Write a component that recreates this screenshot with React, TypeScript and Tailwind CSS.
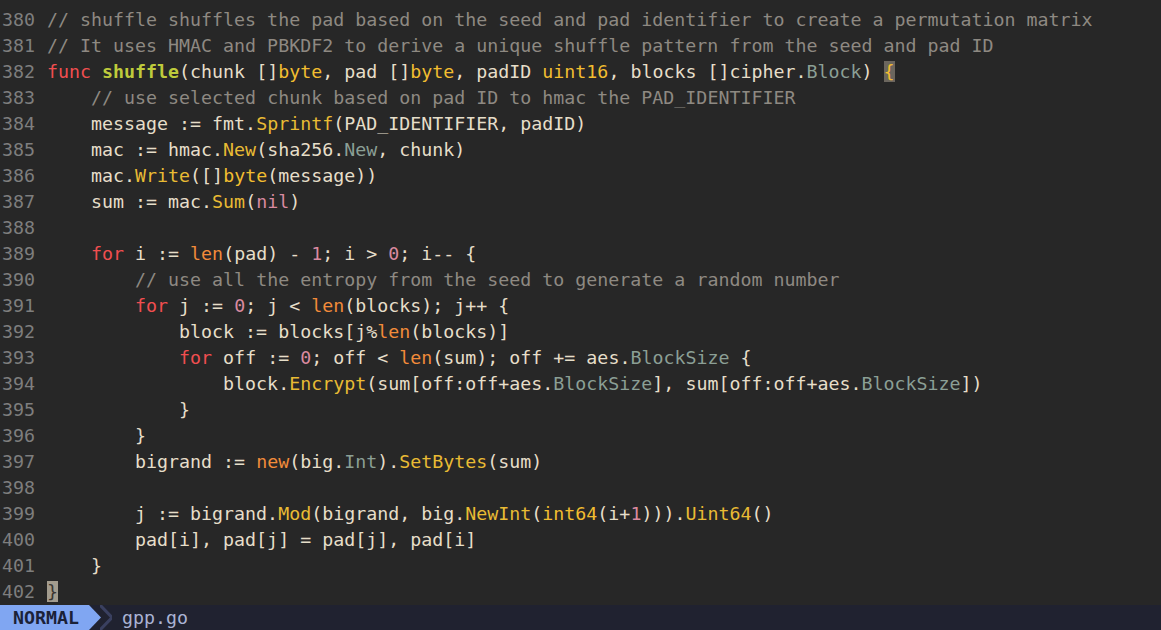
import React from "react";

type Tok = [string, string?];

const C: Record<string, string> = {
  cm: "text-[#8e8982]",
  kw: "text-[#f04e50]",
  def: "text-[#bfcb3c] font-bold",
  ty: "text-[#f2bd30]",
  fn: "text-[#e9bb34]",
  bi: "text-[#f28b3a]",
  num: "text-[#d98aa0]",
  fld: "text-[#8b9f95]",
  br: "text-[#f2bd30] bg-[#6b665e]",
  cur: "text-[#3a3631] bg-[#a39c8e]",
};

const lines: { n: number; toks: Tok[] }[] = [
  { n: 379, toks: [] },
  { n: 380, toks: [["// shuffle shuffles the pad based on the seed and pad identifier to create a permutation matrix", "cm"]] },
  { n: 381, toks: [["// It uses HMAC and PBKDF2 to derive a unique shuffle pattern from the seed and pad ID", "cm"]] },
  {
    n: 382,
    toks: [
      ["func", "kw"], [" "], ["shuffle", "def"], ["(chunk []"], ["byte", "ty"], [", pad []"], ["byte", "ty"],
      [", padID "], ["uint16", "ty"], [", blocks []cipher."], ["Block", "fld"], [") "], ["{", "br"],
    ],
  },
  { n: 383, toks: [["    "], ["// use selected chunk based on pad ID to hmac the PAD_IDENTIFIER", "cm"]] },
  { n: 384, toks: [["    message := fmt."], ["Sprintf", "fn"], ["(PAD_IDENTIFIER, padID)"]] },
  { n: 385, toks: [["    mac := hmac."], ["New", "fn"], ["(sha256."], ["New", "fld"], [", chunk)"]] },
  { n: 386, toks: [["    mac."], ["Write", "fn"], ["([]"], ["byte", "ty"], ["(message))"]] },
  { n: 387, toks: [["    sum := mac."], ["Sum", "fn"], ["("], ["nil", "num"], [")"]] },
  { n: 388, toks: [] },
  {
    n: 389,
    toks: [
      ["    "], ["for", "kw"], [" i := "], ["len", "bi"], ["(pad) - "], ["1", "num"], ["; i > "], ["0", "num"], ["; i-- {"],
    ],
  },
  { n: 390, toks: [["        "], ["// use all the entropy from the seed to generate a random number", "cm"]] },
  {
    n: 391,
    toks: [["        "], ["for", "kw"], [" j := "], ["0", "num"], ["; j < "], ["len", "bi"], ["(blocks); j++ {"]],
  },
  { n: 392, toks: [["            block := blocks[j%"], ["len", "bi"], ["(blocks)]"]] },
  {
    n: 393,
    toks: [
      ["            "], ["for", "kw"], [" off := "], ["0", "num"], ["; off < "], ["len", "bi"],
      ["(sum); off += aes."], ["BlockSize", "fld"], [" {"],
    ],
  },
  {
    n: 394,
    toks: [
      ["                block."], ["Encrypt", "fn"], ["(sum[off:off+aes."], ["BlockSize", "fld"],
      ["], sum[off:off+aes."], ["BlockSize", "fld"], ["])"],
    ],
  },
  { n: 395, toks: [["            }"]] },
  { n: 396, toks: [["        }"]] },
  {
    n: 397,
    toks: [["        bigrand := "], ["new", "bi"], ["(big."], ["Int", "fld"], [")."], ["SetBytes", "fn"], ["(sum)"]],
  },
  { n: 398, toks: [] },
  {
    n: 399,
    toks: [
      ["        j := bigrand."], ["Mod", "fn"], ["(bigrand, big."], ["NewInt", "fn"], ["("], ["int64", "ty"],
      ["(i+"], ["1", "num"], [")))."], ["Uint64", "fn"], ["()"],
    ],
  },
  { n: 400, toks: [["        pad[i], pad[j] = pad[j], pad[i]"]] },
  { n: 401, toks: [["    }"]] },
  { n: 402, toks: [["}", "cur"]] },
];

function CodeLine({ n, toks }: { n: number; toks: Tok[] }) {
  return (
    <div className="flex h-[26px] items-center whitespace-pre">
      <span className="w-[47px] shrink-0 pl-[2px] text-[#7e7e7e]">{n}</span>
      <span className="text-[#e6dec9]">
        {toks.map(([t, k], i) => (
          <span key={i} className={k ? C[k] : undefined}>
            {t}
          </span>
        ))}
      </span>
    </div>
  );
}

export default function App() {
  return (
    <div className="flex h-[630px] w-[1161px] flex-col overflow-hidden bg-[#272727] font-['DejaVu_Sans_Mono',monospace] text-[18.3px]">
      <div className="mt-[-19px] flex-1">
        {lines.map((l) => (
          <CodeLine key={l.n} n={l.n} toks={l.toks} />
        ))}
      </div>
      <div className="flex h-[25px] shrink-0 items-center bg-[#202230]">
        <div className="flex h-full items-center bg-[#80a6f2] pl-[13px] pr-[10px] font-bold text-[#1b2238]">
          NORMAL
        </div>
        <svg width="12" height="25" viewBox="0 0 12 25" className="shrink-0">
          <polygon points="0,0 12,12.5 0,25" fill="#80a6f2" />
        </svg>
        <svg width="12" height="25" viewBox="0 0 12 25" className="-ml-[1px] shrink-0">
          <polyline points="0,0 12,12.5 0,25" fill="none" stroke="#3a4060" strokeWidth="3" />
        </svg>
        <span className="ml-[10px] text-[#aab3d4]">gpp.go</span>
      </div>
    </div>
  );
}
